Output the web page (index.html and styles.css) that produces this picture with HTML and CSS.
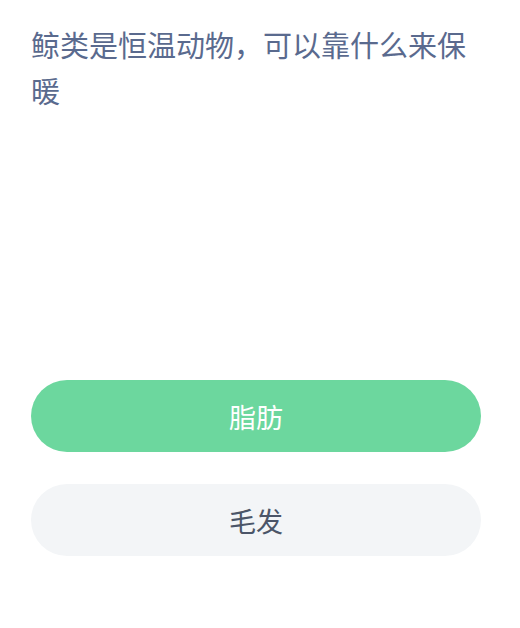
FILE: index.html
```html
<!DOCTYPE html>
<html lang="zh-CN">
<head>
    <meta charset="UTF-8">
    <meta name="viewport" content="width=device-width, initial-scale=1.0">
    <title>答题</title>
    <link rel="stylesheet" href="styles.css">
</head>
<body>

<div class="quiz">
    <h1 class="question">鲸类是恒温动物，可以靠什么来保暖</h1>

    <div class="options">
        <button type="button" class="option option-right">脂肪</button>
        <button type="button" class="option">毛发</button>
    </div>
</div>

</body>
</html>
```

FILE: styles.css
```css
body {
    margin: 0;
    padding: 0;
    background-color: #ffffff;
    font-family: "Noto Sans CJK SC", "Noto Sans", sans-serif;
}
.quiz {
    padding: 21px 39px 0 31px;
}
.question {
    margin: 0;
    font-size: 29px;
    font-weight: normal;
    line-height: 46px;
    color: #5a6a8e;
}
.options {
    display: flex;
    flex-direction: column;
    gap: 32px;
    margin-top: 267px;
}
.option {
    height: 72px;
    border: none;
    border-radius: 36px;
    background-color: #f3f5f7;
    color: #4b5568;
    font-family: inherit;
    font-size: 27px;
    cursor: pointer;
}
.option-right {
    background-color: #6cd79e;
    color: #ffffff;
}
```
